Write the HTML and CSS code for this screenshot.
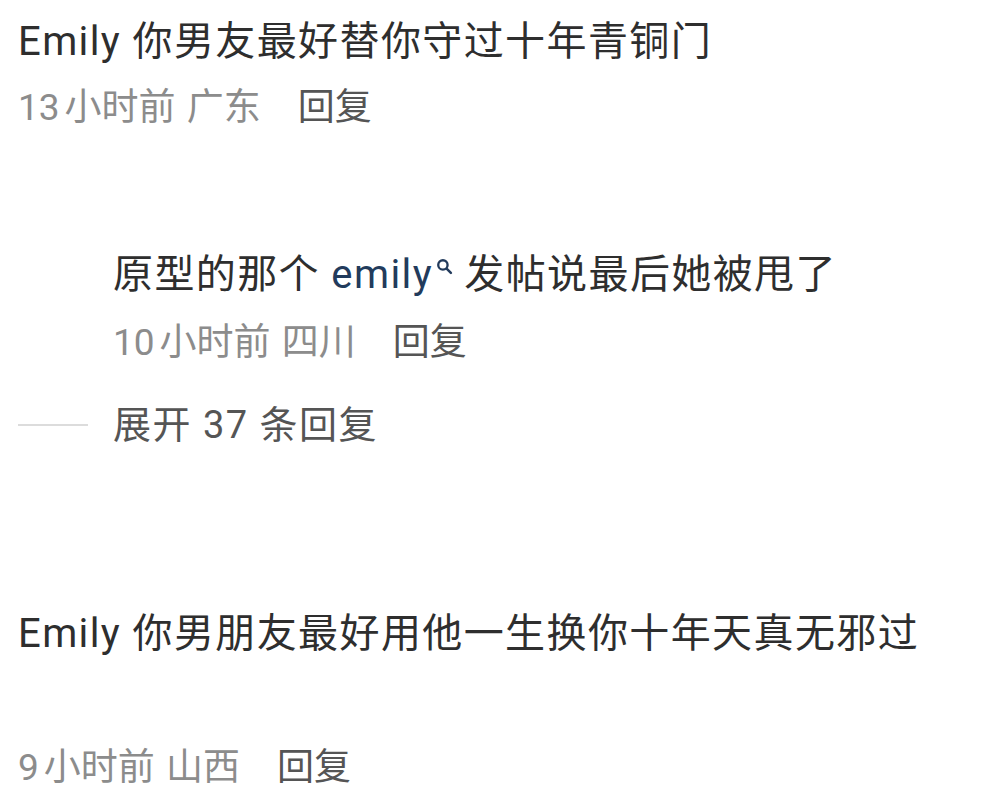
FILE: index.html
```html
<!DOCTYPE html>
<html lang="zh-CN">
<head>
    <meta charset="UTF-8">
    <title>评论</title>
    <link rel="stylesheet" href="styles.css">
</head>
<body>

    <div class="comment">
        <p class="text">Emily 你男友最好替你守过十年青铜门</p>
        <div class="meta"><span class="num">13</span><span>小时前 广东</span><span class="reply">回复</span></div>
    </div>

    <div class="sub-comment">
        <p class="text">原型的那个 <span class="link">emily<svg class="search-icon" viewBox="0 0 16 16" width="17" height="17"><circle cx="6.5" cy="6.5" r="4.4" fill="none" stroke="#223b5c" stroke-width="2.2"/><path d="M10 10 L14 14" stroke="#223b5c" stroke-width="2.4" stroke-linecap="round"/></svg></span> 发帖说最后她被甩了</p>
        <div class="meta"><span class="num">10</span><span>小时前 四川</span><span class="reply">回复</span></div>
    </div>

    <div class="expand">
        <span class="expand-line"></span>
        <span class="expand-text">展开 37 条回复</span>
    </div>

    <div class="comment second">
        <p class="text">Emily 你男朋友最好用他一生换你十年天真无邪过</p>
        <div class="meta spaced"><span class="num">9</span><span>小时前 山西</span><span class="reply">回复</span></div>
    </div>

</body>
</html>
```

FILE: styles.css
```css
body {
    margin: 0;
    background: #ffffff;
    font-family: Roboto, "Noto Sans CJK SC", sans-serif;
    color: #2e2e2e;
    overflow: hidden;
}

p {
    margin: 0;
}

.comment {
    padding-left: 18px;
    padding-top: 14px;
}

.text {
    font-size: 40px;
    line-height: 56px;
    letter-spacing: 1.4px;
    white-space: nowrap;
}

.meta {
    margin-top: 13px;
    font-size: 37px;
    line-height: 50px;
    color: #8c8c8c;
    white-space: nowrap;
    word-spacing: 2px;
}

.meta .num {
    margin-right: 5px;
}

.meta .reply {
    margin-left: 37px;
    color: #555555;
}

.sub-comment {
    padding-left: 113px;
    margin-top: 114px;
}

.sub-comment .meta {
    margin-top: 15px;
}

.link {
    color: #223b5c;
}

.search-icon {
    vertical-align: 13px;
    margin-left: 3px;
}

.expand {
    display: flex;
    align-items: center;
    gap: 25px;
    padding-left: 18px;
    margin-top: 32px;
}

.expand-line {
    width: 70px;
    height: 2px;
    background: #dcdcdc;
}

.expand-text {
    font-size: 38px;
    line-height: 50px;
    letter-spacing: 1.5px;
    color: #555555;
    white-space: nowrap;
}

.comment.second {
    padding-top: 156px;
}

.meta.spaced {
    margin-top: 81px;
}
```
